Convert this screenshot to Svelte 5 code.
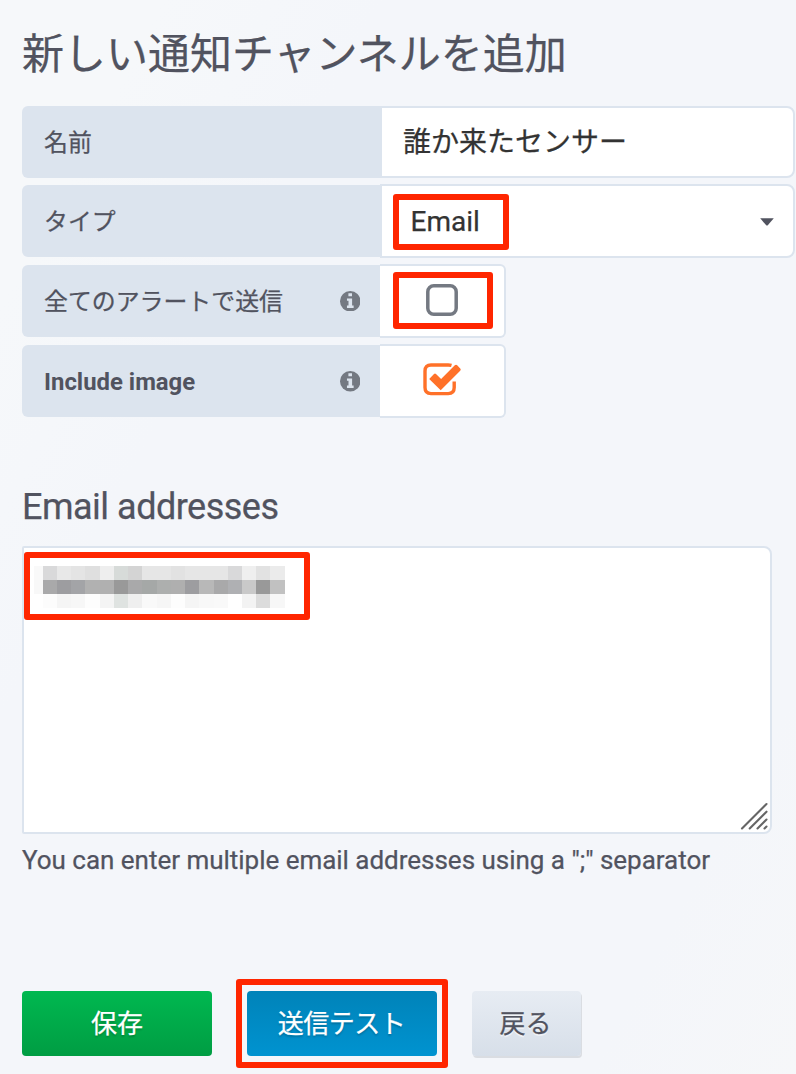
<script>
  let name = $state('誰か来たセンサー');
  const mosaic = [
    ['#f9f9f9', '#d9d9da', '#e8e8e8', '#e4e4e4', '#dfdfdf', '#eeeeee', '#d7dbd9', '#d4d4d4', '#e6e6e6', '#e6e6e6', '#e2e2e2', '#e6e6e6', '#e6e6e6', '#e6e6e6', '#d9d9da', '#efefef', '#e2e2e2', '#ebebeb'],
    ['#f8f8f8', '#a9a9aa', '#9d9da0', '#a3a4a7', '#b1b1b1', '#b0b0b0', '#999999', '#a9a9aa', '#a5a8a7', '#adafae', '#afafaf', '#9d9da0', '#b8b8b8', '#a9a9aa', '#afb0b3', '#c9c9c9', '#999999', '#c1c1c1'],
    ['#ffffff', '#fcfcfc', '#f5f5f5', '#f7f7f7', '#fdfdfd', '#f4f4f4', '#dfe3e1', '#efefef', '#f9f9f9', '#f6f6f6', '#fdfdfd', '#f5f5f5', '#f8f8f8', '#f9f9f9', '#ffffff', '#f3f3f3', '#dcdcdc', '#f7f7f7']
  ];
</script>

{#snippet info()}
  <svg class="info" viewBox="0 0 20 20" width="20.5" height="20.5">
    <circle cx="10" cy="10" r="10" fill="#747982" />
    <path d="M8.2 2.2h3.5v3H8.2zM6.8 7.2h5v7h1.5v2.3H6.8v-2.3h1.5V9.5H6.8z" fill="#dce4ee" />
  </svg>
{/snippet}

<main>
  <h1>新しい通知チャンネルを追加</h1>

  <div class="rows">
    <div class="row first">
      <div class="label">名前</div>
      <input class="field" bind:value={name} />
    </div>
    <div class="row">
      <div class="label">タイプ</div>
      <div class="field select">
        <span>Email</span>
        <svg width="14" height="8" viewBox="0 0 14 8"><path d="M.2.3h13.6L8 7q-1 1.1-2 0z" fill="#51535f" /></svg>
        <i class="mark mark-type"></i>
      </div>
    </div>
    <div class="row">
      <div class="label">全てのアラートで送信{@render info()}</div>
      <div class="toggle">
        <svg class="off" width="32" height="32" viewBox="0 0 32 32"><rect x="1.8" y="1.8" width="28.4" height="28.4" rx="6" fill="none" stroke="#747982" stroke-width="3.5" /></svg>
        <i class="mark mark-toggle"></i>
      </div>
    </div>
    <div class="row">
      <div class="label latin">Include image{@render info()}</div>
      <div class="toggle">
        <svg class="on" width="38" height="33" viewBox="0 0 38 33">
          <path d="M28.5 2.4Q27 2 25.2 2H8Q2 2 2 8v16.6q0 6 6 6h17.2q6 0 6-6V18.5" fill="none" stroke="#ff7129" stroke-width="3.4" />
          <path d="M17.7 27.2 6.2 15.9l4.8-5q1-.8 2 0l5.1 5.2L31.8 2.3q1.3-.9 2.4 0l3 3.1q1 1.2 0 2.3z" fill="#ff7129" stroke="#fff" stroke-width="1.6" paint-order="stroke" />
        </svg>
      </div>
    </div>
  </div>

  <h2>Email addresses</h2>
  <div class="area">
    <div class="mosaic">
      {#each mosaic as line}
        {#each line as color}<b style:background={color}></b>{/each}
      {/each}
    </div>
    <svg class="grip" width="28" height="28" viewBox="0 0 28 28"><path d="M2 26.5 26.5 2M9.7 26.5 26.5 9.7M17.5 26.5l9-9M24.5 26.5l2-2" stroke="#666" stroke-width="2.1" stroke-linecap="round" /></svg>
    <i class="mark mark-area"></i>
  </div>
  <p>You can enter multiple email addresses using a ";" separator</p>

  <div class="buttons">
    <button class="save">保存</button>
    <div class="wrap"><button class="test">送信テスト</button><i class="mark mark-test"></i></div>
    <button class="back">戻る</button>
  </div>
</main>

<style>
  :global(body) { margin: 0; background: #f4f6fa; }
  main {
    box-sizing: border-box;
    width: 796px;
    height: 1074px;
    padding-left: 22px;
    overflow: hidden;
    color: #51535f;
    background: linear-gradient(118deg, #f6f8fa 0%, #f6f8fa 12%, #f4f6fa 28%, #f4f6fa 85%, #f6f7f9 100%);
    font-family: Roboto, "Noto Sans CJK JP", sans-serif;
    -webkit-text-stroke: .25px currentColor;
  }
  h1 { box-sizing: border-box; margin: 0; height: 106px; padding-top: 2px; line-height: 106px; font-size: 42px; font-weight: 400; white-space: nowrap; }
  .rows { display: flex; flex-direction: column; gap: 6px; }
  .row { display: flex; align-items: center; height: 74px; }
  .row.first { height: 72px; }
  .label {
    box-sizing: border-box;
    display: flex;
    align-items: center;
    justify-content: space-between;
    width: 358px;
    height: 72px;
    padding: 0 20px 4px 22px;
    border-radius: 6px 0 0 6px;
    background: #dce4ee;
    font-size: 23.9px;
    white-space: nowrap;
  }
  .label .info { margin-top: 4px; }
  .label.latin { padding-bottom: 0; padding-top: 1px; font-weight: 700; -webkit-text-stroke: 0; }
  .label.latin .info { margin-top: 0; }
  .info { flex: none; }
  .field {
    position: relative;
    box-sizing: border-box;
    width: 415px;
    height: 100%;
    margin: 0;
    padding: 0 21px 4px;
    border: 2px solid #dce4ee;
    border-radius: 0 8px 8px 0;
    background: #fff;
    color: #333;
    font: 400 28px Roboto, "Noto Sans CJK JP", sans-serif;
    -webkit-text-stroke: .25px currentColor;
    outline: none;
  }
  .select { display: flex; align-items: center; justify-content: space-between; padding: 0 19px 0 28.5px; }
  .select svg { margin-top: 1px; }
  .toggle {
    position: relative;
    box-sizing: border-box;
    display: flex;
    align-items: center;
    justify-content: center;
    width: 125.5px;
    height: 74px;
    border: 2px solid #dce4ee;
    border-left: 0;
    border-radius: 0 6px 6px 0;
    background: #fff;
  }
  .off { margin: 0 0 3px; }
  .on { margin: 0 0 4px; }
  h2 { margin: 68px 0 0; height: 60px; line-height: 42px; font-size: 36px; font-weight: 400; letter-spacing: -.5px; white-space: nowrap; }
  .area {
    position: relative;
    box-sizing: border-box;
    width: 750px;
    height: 288px;
    border: 2px solid #dce4ee;
    border-radius: 2px 8px 8px 2px;
    background: #fff;
    padding: 17.5px 0 0 10.3px;
  }
  .mosaic { display: grid; grid-template-columns: 8.4px repeat(17, 14.24px); grid-auto-rows: 14.1px; }
  .grip { position: absolute; right: 2px; bottom: 2px; }
  p { margin: 8px 0 0; line-height: 36px; font-size: 26px; letter-spacing: -.02px; white-space: nowrap; }
  .buttons { display: flex; gap: 35px; margin-top: 113px; }
  button {
    box-sizing: border-box;
    display: block;
    width: 190px;
    height: 65px;
    padding: 0 0 4px;
    border: 0;
    border-radius: 4px;
    color: #fff;
    font: 400 26px Roboto, "Noto Sans CJK JP", sans-serif;
    -webkit-text-stroke: .25px currentColor;
    text-shadow: 0 2px 2px #0003;
  }
  .save { background: linear-gradient(#00b850, #009d43); }
  .wrap { position: relative; }
  .test { padding-right: 1px; letter-spacing: -.5px; background: linear-gradient(#0083b9, #0093d0); }
  .back { width: 109px; padding-right: 2px; color: #51535f; background: linear-gradient(#e7ecf3, #d7dfe9); box-shadow: 1px 2px 0 #dadde2; text-shadow: 0 2px 0 #fff8; }
  .mark { position: absolute; box-sizing: border-box; border: 6px solid #ff2600; border-radius: 3px; pointer-events: none; }
  .mark-type { left: 11px; top: 8px; width: 116px; height: 56px; }
  .mark-toggle { left: 13px; top: 6px; width: 100px; height: 57px; }
  .mark-area { left: 0; top: 4px; width: 286px; height: 68px; }
  .mark-test { left: -11px; top: -12px; width: 212px; height: 89px; }
</style>
